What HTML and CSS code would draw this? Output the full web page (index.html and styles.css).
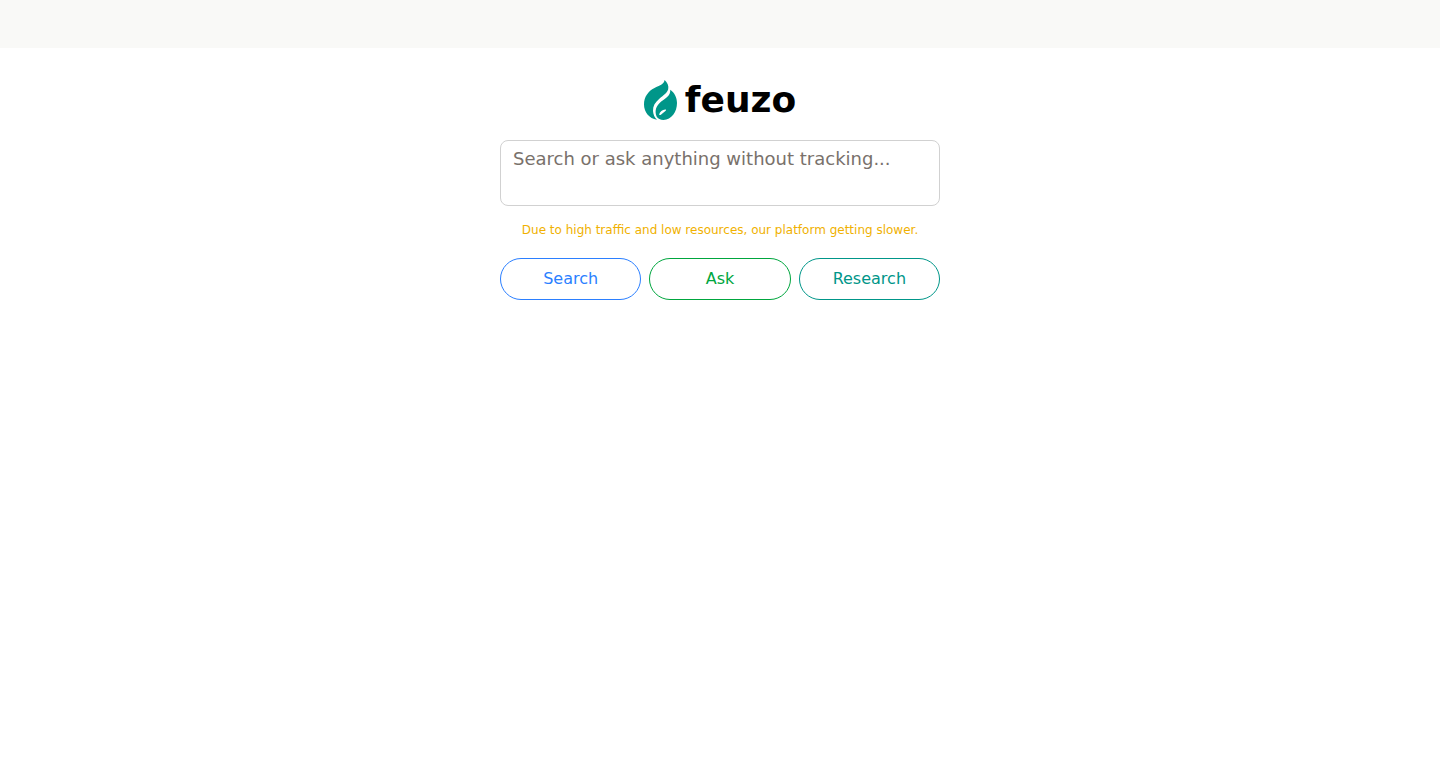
FILE: index.html
```html
<!DOCTYPE html>
<html lang="en">
<head>
<meta charset="utf-8">
<meta name="viewport" content="width=device-width, initial-scale=1">
<title>feuzo</title>
<link rel="stylesheet" href="styles.css">
</head>
<body>
<header class="topbar"></header>
<main class="home">
  <h1 class="brand">
    <svg class="brand-mark" viewBox="0 0 33 40" aria-hidden="true">
      <path d="M20.600 0C23.300 2.500 25 6 24.200 9.300C23.200 13 19.500 15.300 15.600 18.500C11 22.300 8.800 26.200 9 31C9.200 34.700 10.700 37.500 13 39.800C5 38.500 0 32 0 24.500C0 17 4 11.200 10.500 8C15.500 5.500 20 4.500 20.600 0Z"/>
      <path fill-rule="evenodd" d="M26.300 9.700C30.500 12.500 33 17.500 33 23C33 32 27.500 39.500 19.500 40C16.500 40 13.800 38.800 12.600 36.500C10.400 31 11.900 25.800 17.200 21.500C22.200 17.500 26.400 16 26.300 9.700ZM15.200 34.200C15.200 35.200 16.200 35.400 16.900 34.700L21.700 30.700C22.300 30 22 29.400 21.200 29.500C18.300 30 15.900 31.600 15.200 34.200Z"/>
    </svg>
    <span>feuzo</span>
  </h1>
  <form class="search">
    <textarea class="query" rows="2" aria-label="Search or ask" placeholder="Search or ask anything without tracking..."></textarea>
    <p class="notice">Due to high traffic and low resources, our platform getting slower.</p>
    <div class="actions">
      <button class="action action-search" type="button">Search</button>
      <button class="action action-ask" type="button">Ask</button>
      <button class="action action-research" type="button">Research</button>
    </div>
  </form>
</main>
</body>
</html>
```
FILE: styles.css
```css
* {
  box-sizing: border-box;
}

body {
  margin: 0;
  background: #fff;
  color: #000;
  font-family: "DejaVu Sans", sans-serif;
  font-size: 16px;
  line-height: 24px;
}

.topbar {
  height: 48px;
  background: #f9f9f7;
}

.home {
  max-width: 472px;
  margin: 0 auto;
  padding: 32px 16px;
}

.brand {
  display: flex;
  justify-content: center;
  align-items: center;
  gap: 8px;
  margin: 0 0 20px;
  font-size: 36px;
  line-height: 40px;
  font-weight: 700;
}

.brand-mark {
  width: 33px;
  height: 40px;
  fill: #009689;
}

.query {
  display: block;
  width: 100%;
  padding: 4px 12px;
  border: 1px solid #d1d1d1;
  border-radius: 8px;
  background: #fff;
  color: #000;
  font: inherit;
  font-size: 18px;
  line-height: 28px;
  resize: none;
}

.query::placeholder {
  color: #79716b;
  opacity: 1;
}

.notice {
  margin: 16px 0 20px;
  color: #f0b100;
  font-size: 12px;
  line-height: 16px;
  text-align: center;
}

.actions {
  display: grid;
  grid-template-columns: repeat(3, 1fr);
  gap: 8px;
}

.action {
  padding: 8px 12px;
  border: 1px solid currentColor;
  border-radius: 24px;
  background: transparent;
  font: inherit;
  cursor: pointer;
}

.action-search {
  color: #2b7fff;
}

.action-ask {
  color: #00a63e;
}

.action-research {
  color: #009689;
}
```
